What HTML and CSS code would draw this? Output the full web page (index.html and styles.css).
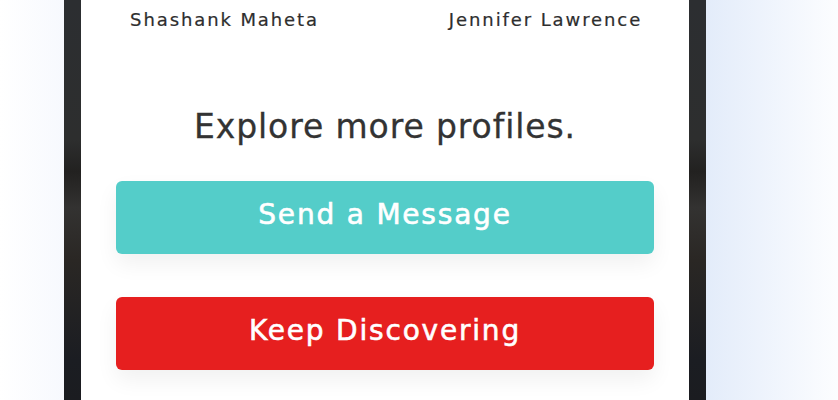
FILE: index.html
```html
<!DOCTYPE html>
<html lang="en">
<head>
  <meta charset="UTF-8">
  <meta name="viewport" content="width=device-width, initial-scale=1">
  <title>Match | Explore profiles</title>
  <link rel="stylesheet" href="styles.css">
</head>
<body>

  <main class="pagina">
    <section class="telefono">
      <div class="pantalla">
        <div class="perfiles">
          <p class="nombre">Shashank Maheta</p>
          <p class="nombre">Jennifer Lawrence</p>
        </div>

        <h2 class="titulo">Explore more profiles.</h2>

        <button class="boton boton-mensaje">Send a Message</button>
        <button class="boton boton-descubrir">Keep Discovering</button>
      </div>
    </section>
  </main>

</body>
</html>
```

FILE: styles.css
```css
* {
  margin: 0;
  padding: 0;
  box-sizing: border-box;
}

body {
  font-family: 'DejaVu Sans', 'Noto Sans', sans-serif;
  color: #333;
  height: 400px;
  overflow: hidden;
  background: linear-gradient(90deg, #ffffff 0px, #f7f9fe 64px, #e3ecfa 706px, #fcfdff 838px);
}

.pagina {
  display: flex;
  height: 400px;
  padding-left: 64px;
}

.telefono {
  width: 642px;
  height: 100%;
  padding: 0 17px;
  background: linear-gradient(180deg, #2c2e31 0%, #2d2e2e 35%, #222120 43%, #333231 52%, #2a2724 65%, #1b1d22 90%, #1b1c20 100%);
}

.pantalla {
  height: 100%;
  background-color: white;
  padding: 8px 35px 0;
  display: flex;
  flex-direction: column;
}

.perfiles {
  display: grid;
  grid-template-columns: 1fr 1fr;
  gap: 104px;
}

.nombre {
  text-align: center;
  font-size: 18px;
  line-height: 24px;
  letter-spacing: 1.9px;
  color: #2e2e2e;
  -webkit-text-stroke: 0.2px #2e2e2e;
}

.titulo {
  margin-top: 75px;
  text-align: center;
  font-size: 33px;
  line-height: 40px;
  font-weight: 400;
  letter-spacing: 0.9px;
  color: #333;
  -webkit-text-stroke: 0.3px #333;
}

.boton {
  height: 73px;
  padding-bottom: 6px;
  border: none;
  border-radius: 6px;
  color: white;
  font-family: inherit;
  font-size: 28px;
  letter-spacing: 1.8px;
  cursor: pointer;
  -webkit-text-stroke: 0.6px white;
  box-shadow: 0 10px 22px rgba(0, 0, 0, 0.06);
}

.boton-mensaje {
  margin-top: 34px;
  background-color: #54cdc9;
}

.boton-descubrir {
  margin-top: 43px;
  background-color: #e61f1f;
}
```
